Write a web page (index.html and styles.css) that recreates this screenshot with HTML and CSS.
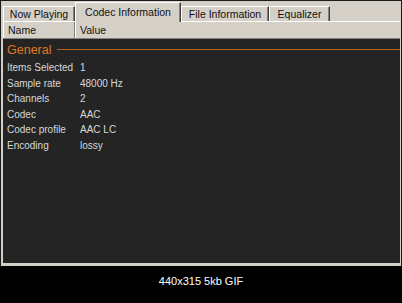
FILE: index.html
```html
<!DOCTYPE html>
<html lang="en">
    <head>
        <meta charset="utf-8">
        <link rel="stylesheet" href="styles.css">
    </head>
    <body>
        <div id="layout">
            <div id="win">
                <div id="tabs">
                    <div class="tab t1">Now Playing</div>
                    <div class="tab t2 sel">Codec Information</div>
                    <div class="tab t3">File Information</div>
                    <div class="tab t4">Equalizer</div>
                </div>
                <div id="head">
                    <div class="col name">Name</div>
                    <div class="col">Value</div>
                </div>
                <div id="list">
                    <div class="group">
                        <span>General</span>
                        <i></i>
                    </div>
                    <div class="row"><span class="k">Items Selected</span><span>1</span></div>
                    <div class="row"><span class="k">Sample rate</span><span>48000 Hz</span></div>
                    <div class="row"><span class="k">Channels</span><span>2</span></div>
                    <div class="row"><span class="k">Codec</span><span>AAC</span></div>
                    <div class="row"><span class="k">Codec profile</span><span>AAC LC</span></div>
                    <div class="row"><span class="k">Encoding</span><span>lossy</span></div>
                </div>
            </div>
            <div id="caption">440x315 5kb GIF</div>
        </div>
    </body>
</html>
```

FILE: styles.css
```css
*{
	margin: 0;
	padding: 0;
	box-sizing: border-box;
}
body{
	background: #000;
	font-family: "Liberation Sans", Arial, sans-serif;
	font-size: 10.5px;
}
#layout{
	width: 402px;
	height: 303px;
}
#win{
	height: 266px;
	border-top: 1px solid #1a1a1a;
	border-left: 1px solid #1a1a1a;
	border-right: 1px solid #1a1a1a;
	background: #d4d0c8;
	padding: 0 1px 3px 2px;
	display: flex;
	flex-direction: column;
}
#tabs{
	height: 21px;
	display: flex;
	align-items: flex-end;
	border-bottom: 1px solid #fff;
}
.tab{
	flex: none;
	height: 15px;
	color: #111;
	text-align: center;
	white-space: nowrap;
	line-height: 15px;
	border-top: 1px solid #fff;
	border-left: 1px solid #fff;
	border-right: 1px solid #404040;
	box-shadow: inset -1px 0 #808080;
}
.t1{ width: 72px; }
.t2{ width: 106px; }
.t3{ width: 88px; }
.t4{ width: 61px; }
.sel{
	height: 20px;
	margin-bottom: -1px;
	line-height: 18px;
	background: #d4d0c8;
}
#head{
	height: 17px;
	display: flex;
	color: #111;
	border-bottom: 1px solid #808080;
}
.col{
	padding-left: 4px;
	line-height: 16px;
	border-left: 1px solid #fff;
	flex: 1;
}
.col.name{
	flex: none;
	width: 72px;
	border-right: 1px solid #808080;
}
#list{
	flex: 1;
	background: #242424;
	color: #d8d8d8;
	padding: 3px 0 0 4px;
}
.group{
	display: flex;
	align-items: center;
	height: 15px;
	margin-bottom: 3px;
	color: #e0781e;
	font-size: 12.5px;
}
.group i{
	flex: 1;
	height: 1px;
	margin-left: 6px;
	background: #b8621a;
}
.row{
	display: flex;
	height: 15.6px;
	line-height: 15.6px;
	font-size: 10px;
}
.k{
	width: 73px;
}
#caption{
	color: #fff;
	text-align: center;
	font-size: 11px;
	line-height: 30px;
}
```
